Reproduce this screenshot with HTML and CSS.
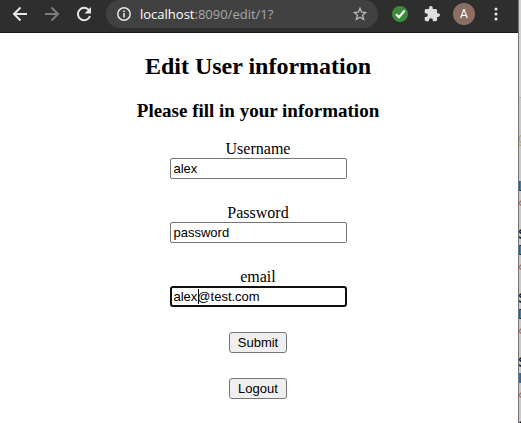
FILE: index.html
```html
<!DOCTYPE html>
<html lang="en">
<head>
<meta charset="utf-8">
<title>Edit User information</title>
<link rel="stylesheet" href="styles.css">
</head>
<body>
<div class="browser">
  <header class="toolbar">
    <button class="tool" type="button" aria-label="Back">
      <svg width="16" height="16" viewBox="0 0 16 16" fill="none" stroke="#e6e6e6" stroke-width="2"><path d="M15 8H2.5M8.5 1.5 2 8l6.500 6.500"/></svg>
    </button>
    <button class="tool" type="button" aria-label="Forward" disabled>
      <svg width="16" height="16" viewBox="0 0 16 16" fill="none" stroke="#7c7c7c" stroke-width="2"><path d="M1 8h12.500M7.500 1.500 14 8l-6.500 6.500"/></svg>
    </button>
    <button class="tool" type="button" aria-label="Reload">
      <svg width="16" height="16" viewBox="0 0 16 16"><path d="M13.200 4.500A6.200 6.200 0 1 0 14 10" fill="none" stroke="#e6e6e6" stroke-width="2"/><path d="M15 1v6.500H8.500z" fill="#e6e6e6"/></svg>
    </button>
    <div class="address">
      <svg width="14" height="14" viewBox="0 0 14 14"><circle cx="7" cy="7" r="6.200" fill="none" stroke="#e6e6e6" stroke-width="1.500"/><path d="M6.200 3.500h1.600V5H6.200zM6.200 6h1.600v4.500H6.200z" fill="#e6e6e6"/></svg>
      <span class="url"><span class="host">localhost</span>:8090/edit/1?</span>
      <button class="star" type="button" aria-label="Bookmark">
        <svg width="14" height="14" viewBox="0 0 14 14" fill="none" stroke="#bababa" stroke-width="1.300"><path d="M7 1.200 8.600 5.200l4.200.300-3.200 2.700 1 4.200L7 10.200l-3.600 2.200 1-4.200L1.200 5.500l4.200-.3z"/></svg>
      </button>
    </div>
    <button class="tool check" type="button" aria-label="Safe site">
      <svg width="16" height="16" viewBox="0 0 16 16"><circle cx="8" cy="8" r="8" fill="#3d8b3a"/><path d="M4 8.300 7 11.200 12.700 4.500" fill="none" stroke="#fff" stroke-width="2.200"/></svg>
    </button>
    <button class="extensions" type="button" aria-label="Extensions">
      <svg width="16" height="16" viewBox="1 1 22 22" fill="#dedede"><path d="M20.500 11H19V7c0-1.100-.9-2-2-2h-4V3.500a2.500 2.500 0 0 0-5 0V5H4c-1.100 0-2 .9-2 2v3.800h1.500a2.700 2.700 0 0 1 0 5.400H2V20c0 1.100.9 2 2 2h3.800v-1.500a2.700 2.700 0 0 1 5.400 0V22H17c1.100 0 2-.9 2-2v-4h1.500a2.500 2.500 0 0 0 0-5z"/></svg>
    </button>
    <button class="avatar" type="button">A</button>
    <button class="menu" type="button" aria-label="Menu">
      <svg width="4" height="14" viewBox="0 0 4 14" fill="#e6e6e6"><circle cx="2" cy="2" r="1.500"/><circle cx="2" cy="7" r="1.500"/><circle cx="2" cy="12" r="1.500"/></svg>
    </button>
  </header>
  <main class="page">
    <h2>Edit User information</h2>
    <h3>Please fill in your information</h3>
    <form class="form">
      <div class="field">
        <label for="username">Username</label>
        <input id="username" type="text" value="alex">
      </div>
      <div class="field">
        <label for="password">Password</label>
        <input id="password" type="text" value="password">
      </div>
      <div class="field">
        <label for="email">email</label>
        <div class="active">
          <input id="email" type="text" value="alex@test.com">
          <span class="caret"></span>
        </div>
      </div>
      <button class="action" type="submit">Submit</button>
    </form>
    <button class="action" type="button">Logout</button>
  </main>
</div>
<aside class="behind" aria-hidden="true">
  <div class="behind-top"></div>
  <div class="entry"><span class="tint">g</span><span></span><span></span><span class="name">L</span><span class="tag">‹</span></div>
  <div class="entry"><span></span><span>S</span><span class="name">D</span><span class="tag">‹</span></div>
  <div class="entry"><span></span><span>S</span><span class="name">D</span><span class="tag">‹</span></div>
  <div class="entry"><span></span><span>S</span><span class="name">I</span><span class="tag">‹</span></div>
  <div class="entry"><span></span><span>S</span></div>
</aside>
</body>
</html>
```
FILE: styles.css
```css
* {
  box-sizing: border-box;
}

body {
  display: flex;
  height: 100vh;
  margin: 0;
  overflow: hidden;
  background: #fff;
  color: #000;
  font: 16px/18px "Liberation Serif", serif;
}

.browser {
  flex: 1;
  min-width: 0;
}

.toolbar {
  display: flex;
  align-items: flex-start;
  height: 33px;
  padding: 0 20px 0 12px;
  background: #2e2e2e;
  border-bottom: 1px solid #1b1b1b;
}

.toolbar button {
  display: flex;
  align-items: center;
  justify-content: center;
  flex: none;
  height: 28px;
  margin: 0;
  padding: 0;
  background: none;
  border: 0;
}

.toolbar .tool {
  width: 16px;
  margin-right: 16px;
}

.toolbar .check {
  margin-left: 14px;
}

.toolbar .extensions {
  width: 16px;
}

.address {
  display: flex;
  align-items: center;
  flex: 1;
  min-width: 0;
  height: 28px;
  margin-left: -2px;
  padding: 0 11px;
  background: #414141;
  border-radius: 14px;
}

.url {
  flex: 1;
  margin-left: 9px;
  color: #a8a8a8;
  font: 13px/20px "Open Sans", "Noto Sans", sans-serif;
}

.host {
  color: #fff;
}

.toolbar .avatar {
  width: 22px;
  height: 22px;
  margin: 3px 0 0 13px;
  background: #8d6e63;
  border-radius: 50%;
  color: #fff;
  font: 12px/22px Roboto, sans-serif;
}

.toolbar .menu {
  width: 4px;
  margin-left: 19px;
}

.page {
  display: flex;
  flex-direction: column;
  align-items: center;
  padding: 19px 10px 0 8px;
}

h2 {
  margin: 0 0 20px;
  font-size: 24px;
  line-height: 28px;
}

h3 {
  margin: 0 0 18px;
  font-size: 19px;
  line-height: 22px;
}

.form {
  display: flex;
  flex-direction: column;
  align-items: center;
  gap: 25px;
  margin-bottom: 25px;
}

.field {
  display: flex;
  flex-direction: column;
  align-items: center;
}

input {
  display: block;
  width: 177px;
  height: 21px;
  margin: 0;
  padding: 1px 3px;
  background: #fff;
  border: 1px solid #767676;
  border-radius: 2px;
  color: #000;
  font: 13px/15px "Liberation Sans", sans-serif;
}

.active {
  position: relative;
}

.active input {
  padding: 0 2px;
  border: 2px solid #101010;
  border-radius: 3px;
}

.caret {
  position: absolute;
  top: 3px;
  left: 28px;
  width: 1px;
  height: 15px;
  background: #000;
}

.action {
  height: 21px;
  margin: 0;
  padding: 0 8px;
  background: #efefef;
  border: 1px solid #767676;
  border-radius: 3px;
  color: #000;
  font: 13px/15px "Liberation Sans", sans-serif;
}

.behind {
  flex: none;
  width: 3px;
  overflow: hidden;
  background: #cacaca;
  border-left: 1px solid #747474;
  font: 14px/16px "Liberation Sans", sans-serif;
}

.behind-top {
  height: 98px;
  margin-bottom: 32px;
  background: #d2d2d2;
  border-bottom: 1px solid #b0b0b0;
}

.entry {
  text-indent: -1px;
}

.entry span {
  display: block;
  height: 16px;
}

.entry .tint {
  color: #c0a860;
}

.entry .name {
  color: #10304c;
}

.entry .tag {
  color: #a06a48;
}
```
